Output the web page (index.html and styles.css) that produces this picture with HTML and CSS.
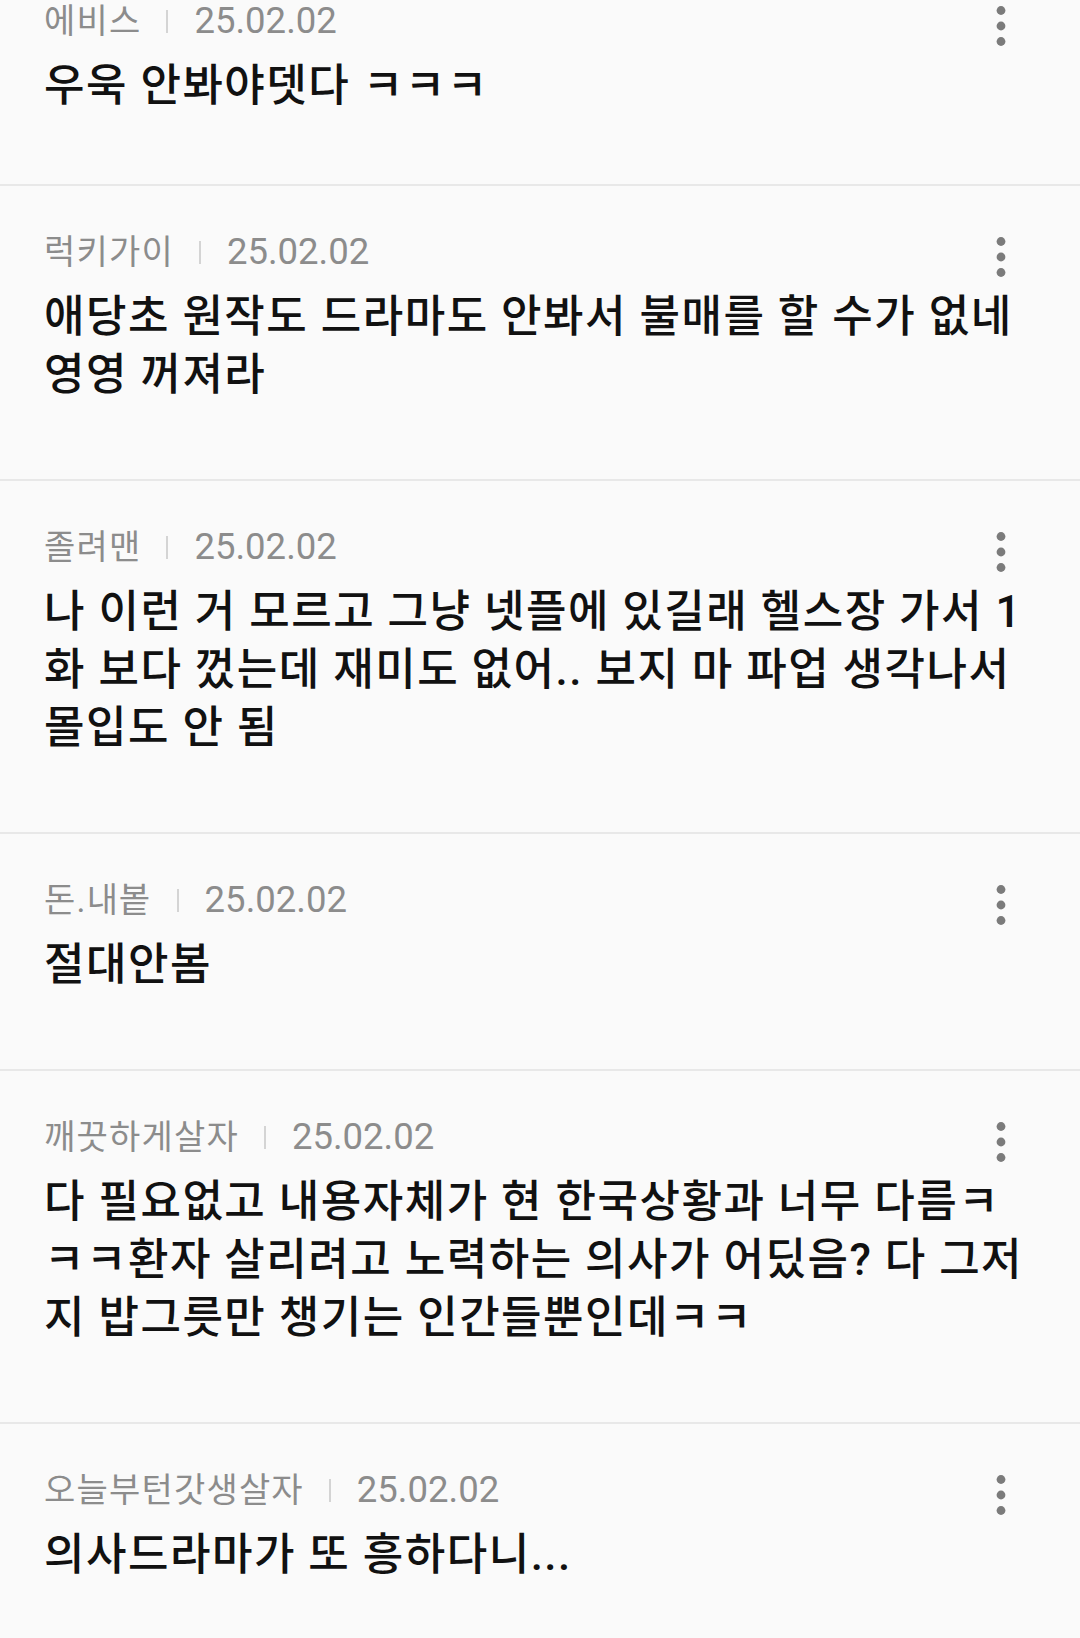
FILE: index.html
```html
<!DOCTYPE html>
<html lang="ko">
<head>
  <meta charset="UTF-8" />
  <meta name="viewport" content="width=device-width, initial-scale=1.0"/>
  <title>댓글</title>
  <link rel="stylesheet" href="styles.css">
</head>
<body>
  <ul class="comments">
    <li class="comment">
      <div class="head">
        <span class="name">에비스</span>
        <span class="bar"></span>
        <span class="date">25.02.02</span>
        <button class="more" aria-label="더보기">
          <svg width="10" height="40" viewBox="0 0 10 40"><circle cx="5" cy="4.5" r="4.4"/><circle cx="5" cy="20" r="4.4"/><circle cx="5" cy="35.5" r="4.4"/></svg>
        </button>
      </div>
      <p class="text">우욱 안봐야뎃다 ㅋㅋㅋ</p>
    </li>

    <li class="comment">
      <div class="head">
        <span class="name">럭키가이</span>
        <span class="bar"></span>
        <span class="date">25.02.02</span>
        <button class="more" aria-label="더보기">
          <svg width="10" height="40" viewBox="0 0 10 40"><circle cx="5" cy="4.5" r="4.4"/><circle cx="5" cy="20" r="4.4"/><circle cx="5" cy="35.5" r="4.4"/></svg>
        </button>
      </div>
      <p class="text">애당초 원작도 드라마도 안봐서 불매를 할 수가 없네 영영 꺼져라</p>
    </li>

    <li class="comment">
      <div class="head">
        <span class="name">졸려맨</span>
        <span class="bar"></span>
        <span class="date">25.02.02</span>
        <button class="more" aria-label="더보기">
          <svg width="10" height="40" viewBox="0 0 10 40"><circle cx="5" cy="4.5" r="4.4"/><circle cx="5" cy="20" r="4.4"/><circle cx="5" cy="35.5" r="4.4"/></svg>
        </button>
      </div>
      <p class="text">나 이런 거 모르고 그냥 넷플에 있길래 헬스장 가서 1화 보다 껐는데 재미도 없어.. 보지 마 파업 생각나서 몰입도 안 됨</p>
    </li>

    <li class="comment">
      <div class="head">
        <span class="name">돈.내봍</span>
        <span class="bar"></span>
        <span class="date">25.02.02</span>
        <button class="more" aria-label="더보기">
          <svg width="10" height="40" viewBox="0 0 10 40"><circle cx="5" cy="4.5" r="4.4"/><circle cx="5" cy="20" r="4.4"/><circle cx="5" cy="35.5" r="4.4"/></svg>
        </button>
      </div>
      <p class="text">절대안봄</p>
    </li>

    <li class="comment">
      <div class="head">
        <span class="name">깨끗하게살자</span>
        <span class="bar"></span>
        <span class="date">25.02.02</span>
        <button class="more" aria-label="더보기">
          <svg width="10" height="40" viewBox="0 0 10 40"><circle cx="5" cy="4.5" r="4.4"/><circle cx="5" cy="20" r="4.4"/><circle cx="5" cy="35.5" r="4.4"/></svg>
        </button>
      </div>
      <p class="text">다 필요없고 내용자체가 현 한국상황과 너무 다름ㅋㅋㅋ환자 살리려고 노력하는 의사가 어딨음? 다 그저지 밥그릇만 챙기는 인간들뿐인데ㅋㅋ</p>
    </li>

    <li class="comment">
      <div class="head">
        <span class="name">오늘부턴갓생살자</span>
        <span class="bar"></span>
        <span class="date">25.02.02</span>
        <button class="more" aria-label="더보기">
          <svg width="10" height="40" viewBox="0 0 10 40"><circle cx="5" cy="4.5" r="4.4"/><circle cx="5" cy="20" r="4.4"/><circle cx="5" cy="35.5" r="4.4"/></svg>
        </button>
      </div>
      <p class="text">의사드라마가 또 흥하다니...</p>
    </li>
  </ul>
</body>
</html>
```

FILE: styles.css
```css
body {
  margin: 0;
  background: #fafafa;
  font-family: Roboto, "Noto Sans CJK KR", sans-serif;
  overflow: hidden;
  height: 100vh;
}

.comments {
  list-style: none;
  margin: -4px 0 0;
  padding: 0;
}

.comment {
  padding: 41px 40px 75px 44px;
  border-bottom: 2px solid #e8e8e8;
}

/* list is scrolled, first row sits under the top edge */
.comment:first-child {
  padding-top: 0;
  padding-bottom: 69px;
}

.head {
  display: flex;
  align-items: center;
  height: 50px;
  margin-bottom: 11px;
  color: #8c8c8c;
}

.name {
  font-size: 34px;
  letter-spacing: 1.2px;
  line-height: 1;
}

.bar {
  width: 2px;
  height: 23px;
  background: #d4d4d4;
  margin: 0 26px 0 25px;
}

.date {
  font-size: 36.5px;
  line-height: 1;
}

.more {
  margin: 10px 19px 0 auto;
  width: 40px;
  height: 40px;
  padding: 0;
  border: none;
  background: none;
  display: flex;
  align-items: center;
  justify-content: center;
}

.more svg {
  fill: #7b7b7b;
}

.text {
  margin: 0;
  font-size: 44px;
  font-weight: 500;
  line-height: 58px;
  letter-spacing: 1.5px;
  color: #111;
}
```
